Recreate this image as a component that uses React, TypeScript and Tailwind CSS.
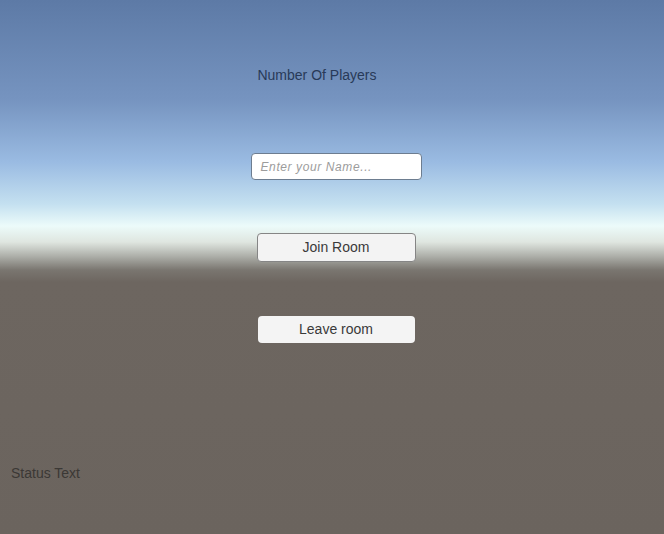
export default function App() {
  return (
    <div
      className="relative flex h-[534px] w-[664px] flex-col overflow-hidden bg-[linear-gradient(to_bottom,#5d7aa6_0px,#7694c0_100px,#9abbe2_162px,#c4e0f0_204px,#ecfbfa_226px,#dfe6e0_242px,#aeb0aa_256px,#7a7670_270px,#6d6660_282px,#6b645e_534px)] font-['Liberation_Sans',Arial,sans-serif]"
    >
      <div className="flex flex-col items-center">
        <p className="mt-[67px] mr-[30px] text-[14px] leading-4 text-[#283a58]">
          Number Of Players
        </p>

        <div className="mt-[70px] ml-[8px] flex h-[27px] w-[171px] items-center rounded-[4px] border border-[#6d7d90] bg-white px-[9px]">
          <span className="text-[12px] italic tracking-[0.6px] text-[#9c9c9c]">
            Enter your Name...
          </span>
        </div>

        <button className="mt-[53px] ml-[8px] h-[29px] w-[159px] rounded-[4px] border border-[#858585] bg-[#f3f3f3] text-[14px] text-[#3a3a3a]">
          Join Room
        </button>

        <button className="mt-[54px] ml-[8px] h-[27px] w-[157px] rounded-[4px] bg-[#f4f4f4] text-[14px] text-[#3a3a3a]">
          Leave room
        </button>
      </div>

      <p className="mt-[122px] ml-[11px] text-[14px] leading-4 text-[#3b3835]">
        Status Text
      </p>
    </div>
  );
}
